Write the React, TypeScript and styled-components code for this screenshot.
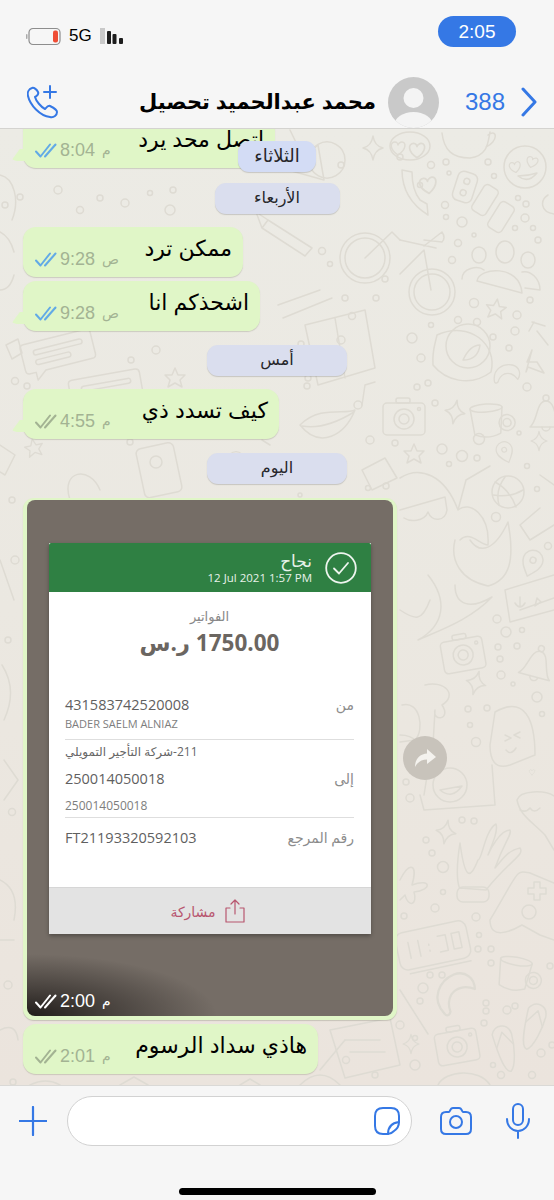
import React, { FunctionComponent } from 'react'
import styled, { createGlobalStyle } from 'styled-components'

const blue = '#3578e5'
const arabic = '"Liberation Sans", "DejaVu Sans", sans-serif'
const receiptFont = '"Open Sans", "DejaVu Sans", sans-serif'

const Global = createGlobalStyle`
  html, body { margin: 0; padding: 0; background: #f6f6f6; }
  body { font-family: ${arabic}; }
`

const Page = styled.div`
  width: 554px;
  height: 1200px;
  display: flex;
  flex-direction: column;
  overflow: hidden;
  color: #000;
`

/* header */
const Header = styled.header`
  height: 129px;
  flex: none;
  box-sizing: border-box;
  background: #f6f6f6;
  border-bottom: 1px solid #d4d3d0;
  display: flex;
  flex-direction: column;
`
const StatusBar = styled.div`
  display: flex;
  align-items: flex-start;
  justify-content: space-between;
  padding: 16px 38px 0 26px;
  height: 48px;
  box-sizing: border-box;
`
const StatusLeft = styled.div`
  display: flex;
  align-items: center;
  gap: 7px;
  margin-top: 10px;
  font-size: 17px;
  line-height: 18px;
`
const ClockPill = styled.div`
  width: 78px;
  height: 31px;
  border-radius: 16px;
  background: ${blue};
  color: #fff;
  font-size: 19px;
  line-height: 31px;
  text-align: center;
`
const NavBar = styled.div`
  display: flex;
  align-items: center;
  height: 52px;
  margin-top: 29px;
  padding: 0 16px 0 27px;
`
const Name = styled.div`
  margin-left: 77px;
  width: 240px;
  font-size: 21px;
  font-weight: 700;
  white-space: nowrap;
  text-align: right;
  direction: rtl;
`
const Avatar = styled.svg`
  margin-left: 12px;
  flex: none;
`
const Count = styled.div`
  margin-left: 26px;
  font-size: 24px;
  color: ${blue};
`
const NavEnd = styled.svg`
  margin-left: 16px;
`

/* chat */
const Chat = styled.main`
  flex: 1;
  min-height: 0;
  position: relative;
  overflow: hidden;
  display: flex;
  flex-direction: column;
  align-items: flex-start;
  background: linear-gradient(180deg, #ecebe5 0%, #ebe8e1 50%, #ebe4dd 100%);
`
const Wallpaper = styled.svg`
  position: absolute;
  inset: 0;
  fill: none;
  stroke: #dedbd3;
  stroke-width: 1.5;
  stroke-linecap: round;
  stroke-linejoin: round;
`
const Bubble = styled.div<{ $width: number; $top: number; $tail?: boolean }>`
  position: relative;
  flex: none;
  box-sizing: border-box;
  width: ${(p) => p.$width}px;
  height: 50px;
  margin: ${(p) => p.$top}px 0 0 23px;
  padding: 0 11px 0 12px;
  border-radius: 13px;
  background: #e0f6c7;
  box-shadow: 0 1px 1px rgba(90, 90, 70, 0.22);
  display: flex;
  justify-content: space-between;

  ${(p) =>
    p.$tail &&
    `&::before {
      content: '';
      position: absolute;
      left: -12px;
      bottom: 7px;
      width: 16px;
      height: 12px;
      background: #e0f6c7;
      clip-path: polygon(0 100%, 55% 0, 100% 0, 100% 100%);
      border-radius: 0 0 0 6px;
    }`}
`
const BubbleText = styled.div`
  order: 2;
  direction: rtl;
  font-size: 22px;
  line-height: 26px;
  margin-top: 9px;
  white-space: nowrap;
`
const Meta = styled.div<{ $light?: boolean }>`
  order: 1;
  align-self: flex-end;
  display: flex;
  align-items: center;
  gap: 2px;
  height: 24px;
  margin-bottom: 6px;
  direction: ltr;
  font-size: 18px;
  color: ${(p) => (p.$light ? '#fff' : '#a3b393')};
`
const MetaSuffix = styled.span`
  font-size: 14px;
  margin-left: 5px;
  font-family: 'DejaVu Sans', sans-serif;
`
const DayPill = styled.div<{ $width: number; $top: number }>`
  flex: none;
  align-self: center;
  position: relative;
  box-sizing: border-box;
  width: ${(p) => p.$width}px;
  height: 31px;
  margin-top: ${(p) => p.$top}px;
  border-radius: 11px;
  background: #dadeee;
  box-shadow: 0 1px 1px rgba(90, 90, 90, 0.25);
  direction: rtl;
  text-align: center;
  font-size: 16px;
  line-height: 30px;
  color: #26262a;
`
const FloatingPill = styled(DayPill)`
  position: absolute;
  top: 12px;
  left: 238px;
  margin: 0;
  background: #d3dcf5;
  font-size: 18px;
`
const ImageBubble = styled.div`
  position: relative;
  flex: none;
  box-sizing: border-box;
  width: 374px;
  height: 522px;
  margin: 14px 0 0 23px;
  padding: 2px 4px 4px;
  border-radius: 11px;
  background: #e0f6c7;
  box-shadow: 0 1px 1px rgba(90, 90, 70, 0.25);
`
const Photo = styled.div`
  position: relative;
  height: 516px;
  box-sizing: border-box;
  padding: 43px 22px 0;
  border-radius: 8px;
  overflow: hidden;
  background:
    radial-gradient(ellipse 190px 62px at 0% 100%, rgba(28, 24, 22, 0.95), rgba(28, 24, 22, 0.5) 45%, rgba(28, 24, 22, 0) 100%),
    #756d66;
`
const PhotoMeta = styled(Meta)`
  position: absolute;
  left: 8px;
  bottom: 3px;
  margin: 0;
`
const ForwardButton = styled.div`
  position: absolute;
  left: 380px;
  top: 238px;
  width: 44px;
  height: 44px;
  border-radius: 50%;
  background: #c8c3bb;
  display: flex;
  align-items: center;
  justify-content: center;
`

/* receipt inside the photo */
const Receipt = styled.div`
  width: 322px;
  background: #fff;
  font-family: ${receiptFont};
  color: #646464;
  box-shadow: 0 2px 4px rgba(0, 0, 0, 0.3);
`
const ReceiptHead = styled.div`
  height: 49px;
  box-sizing: border-box;
  background: #2f8043;
  border-radius: 2px 2px 0 0;
  color: #e8f2ea;
  display: flex;
  justify-content: flex-end;
  align-items: center;
  gap: 13px;
  padding: 0 14px 0 0;
`
const HeadText = styled.div`
  text-align: right;
`
const HeadTitle = styled.div`
  font-size: 17px;
  line-height: 20px;
  direction: rtl;
`
const HeadDate = styled.div`
  font-size: 11.5px;
  line-height: 13px;
`
const ReceiptBody = styled.div`
  height: 295px;
  box-sizing: border-box;
  padding: 16px 17px 0 16px;
`
const BillLabel = styled.div`
  font-size: 13px;
  line-height: 16px;
  text-align: center;
  color: #888;
  direction: rtl;
`
const Amount = styled.div`
  margin-top: 5px;
  height: 66px;
  direction: rtl;
  font-size: 22.5px;
  line-height: 28px;
  font-weight: 700;
  text-align: center;
  color: #6b6661;
`
const Row = styled.div<{ $top?: number }>`
  display: flex;
  justify-content: space-between;
  align-items: center;
  margin-top: ${(p) => p.$top ?? 0}px;
`
const Mono = styled.div`
  font-size: 14.5px;
  line-height: 20px;
  color: #5f5f5f;
`
const Label = styled.div`
  font-size: 14px;
  line-height: 20px;
  color: #8c8c8c;
  direction: rtl;
`
const SmallLine = styled.div<{ $size: number; $top: number; $rule: number }>`
  font-size: ${(p) => p.$size}px;
  line-height: 14px;
  color: #7d7d7d;
  margin-top: ${(p) => p.$top}px;
  padding-bottom: ${(p) => p.$rule}px;
  border-bottom: 1px solid #dedede;
`
const BankLine = styled.div`
  font-size: 12px;
  line-height: 16px;
  margin: 4px 0 9px;
  color: #666;
  direction: rtl;
  text-align: left;
`
const ShareBar = styled.div`
  height: 47px;
  background: #e3e3e3;
  border-top: 1px solid #d6d6d6;
  box-sizing: border-box;
  color: #b8566f;
  display: flex;
  align-items: center;
  justify-content: center;
  gap: 8px;
  padding-right: 4px;
  font-size: 14px;
  direction: rtl;
`

/* composer */
const Composer = styled.footer`
  height: 115px;
  flex: none;
  box-sizing: border-box;
  background: #f6f6f6;
  border-top: 1px solid #dad9d6;
  padding: 10px 22px 0 19px;
  position: relative;
`
const ComposerRow = styled.div`
  display: flex;
  align-items: center;
`
const Input = styled.div`
  width: 345px;
  height: 50px;
  margin-left: 20px;
  box-sizing: border-box;
  border: 1px solid #d2d2d2;
  border-radius: 25px;
  background: #fff;
  display: flex;
  align-items: center;
  justify-content: flex-end;
  padding-right: 11px;
`
const CameraIcon = styled.svg`
  margin-left: 28px;
`
const MicIcon = styled.svg`
  margin-left: 34px;
`
const HomeBar = styled.div`
  width: 197px;
  height: 7px;
  margin: 42px 0 0 160px;
  border-radius: 4px;
  background: #000;
`

const Ticks: FunctionComponent<{ color: string }> = ({ color }) => (
  <svg width="23" height="15" viewBox="0 0 23 15" fill="none" stroke={color} strokeWidth="2" strokeLinecap="round" strokeLinejoin="round">
    <path d="M1 8.5 L5.5 13.5 L15 1.5" />
    <path d="M10 13.5 L20.5 1.5" />
  </svg>
)

const heart = 'M0 7 C-9 1 -8 -6 -3 -6 C-1 -6 0 -4 0 -3 C0 -4 2 -6 4 -6 C8 -6 9 1 0 7 Z'

type At = { x: number; y: number; r?: number; s?: number }
const place = ({ x, y, r = 0, s = 1 }: At) => `translate(${x} ${y}) rotate(${r}) scale(${s})`

const Heart: FunctionComponent<At> = (p) => <path transform={place(p)} d={heart} />
const Star: FunctionComponent<At> = (p) => (
  <path transform={place(p)} d="M0 -10 L3 -3 L10 -3 L5 2 L7 9 L0 5 L-7 9 L-5 2 L-10 -3 L-3 -3 Z" />
)
const Sparkle: FunctionComponent<At> = (p) => (
  <path transform={place(p)} d="M0 -12 Q1.5 -2 10 0 Q1.5 2 0 12 Q-1.5 2 -10 0 Q-1.5 -2 0 -12 Z" />
)
const Pin: FunctionComponent<At> = (p) => (
  <g transform={place(p)}>
    <path d="M0 14 C-6 7 -10 3 -10 -3 A10 10 0 0 1 10 -3 C10 3 6 7 0 14 Z" />
    <circle cy="-3" r="3" />
  </g>
)
const Camera: FunctionComponent<At> = (p) => (
  <g transform={place(p)}>
    <rect x="-21" y="-15" width="42" height="32" rx="4" />
    <rect x="-8" y="-20" width="14" height="5" rx="2" />
    <circle cy="1" r="10" />
    <circle cy="1" r="5" />
    <circle cx="15" cy="-9" r="1.5" />
  </g>
)
const Mug: FunctionComponent<At> = (p) => (
  <g transform={place(p)}>
    <ellipse cy="-14" rx="16" ry="4" />
    <path d="M-16 -14 L-13 12 Q0 18 13 12 L16 -14" />
    <circle cx="20" cy="2" r="8" />
    <circle cx="20" cy="2" r="4" />
  </g>
)
const Croissant: FunctionComponent<At> = (p) => (
  <path transform={place(p)} d="M-14 8 C-16 -6 -4 -12 6 -10 C14 -8 16 0 12 6 C8 0 2 -2 -3 0 C-7 2 -9 5 -10 9 C-12 11 -14 10 -14 8 Z" />
)
const Bell: FunctionComponent<At> = (p) => (
  <g transform={place(p)}>
    <circle cy="-17" r="3" />
    <path d="M-16 12 C-8 6 -10 -14 0 -14 C10 -14 8 6 16 12 Z" />
    <path d="M-4 12 A4 4 0 0 0 4 12" />
  </g>
)
const ChatLines: FunctionComponent<At> = (p) => (
  <g transform={place(p)}>
    <path d="M-34 -16 H30 Q34 -16 34 -12 V10 Q34 14 30 14 H-18 L-28 22 V14 H-34 Q-38 14 -38 10 V-12 Q-38 -16 -34 -16 Z" />
    <rect x="-26" y="-8" width="50" height="5" rx="2.5" />
    <rect x="-26" y="2" width="36" height="5" rx="2.5" />
  </g>
)
const Flipflop: FunctionComponent<At> = (p) => (
  <g transform={place(p)}>
    <path d="M-9 -16 C-4 -26 9 -24 10 -12 C10 0 6 20 0 24 C-6 24 -8 8 -9 -16 Z" />
    <path d="M-8 -2 L1 -16 L9 -2" />
  </g>
)

const dots: [number, number, number][] = [
  [431, 165, 3.5], [446, 162, 3], [449, 173, 2], [488, 162, 3], [494, 176, 2.5], [445, 205, 3.5], [446, 217, 2.5],
  [462, 222, 5], [518, 198, 2.5], [526, 204, 3], [525, 218, 4], [515, 228, 2.5], [533, 228, 2.5], [538, 240, 3],
  [474, 235, 2], [458, 243, 3.5], [452, 260, 3.5], [474, 303, 4.5], [530, 300, 3], [517, 315, 4], [458, 320, 3.5],
  [477, 322, 3.5], [431, 325, 2.5], [412, 338, 5], [421, 358, 4], [515, 331, 4], [493, 337, 3], [509, 348, 3],
  [417, 387, 3], [428, 383, 3], [527, 387, 4], [435, 403, 3], [442, 449, 5], [462, 456, 5.5], [477, 458, 3],
  [449, 464, 2.5], [479, 439, 5.5], [519, 433, 2], [527, 466, 2.5], [537, 489, 2.5], [496, 517, 4.5], [548, 546, 3.5],
  [497, 619, 4], [506, 632, 5], [522, 630, 2.5], [498, 647, 3], [517, 646, 3], [500, 659, 3], [501, 675, 4],
  [513, 684, 2], [537, 697, 5], [542, 714, 2.5], [468, 709, 3], [487, 708, 3], [470, 725, 2.5], [476, 742, 4.5],
  [410, 798, 4], [406, 782, 3], [462, 820, 3], [474, 821, 3], [426, 840, 3], [432, 853, 3], [443, 867, 5.5],
  [443, 892, 2.5], [435, 908, 4], [404, 916, 3], [476, 917, 4], [479, 935, 2.5], [478, 949, 3], [491, 949, 3],
  [491, 963, 3], [430, 975, 3], [442, 975, 3], [423, 988, 5], [420, 1001, 3], [486, 1003, 3], [486, 1011, 3],
  [507, 1010, 4], [515, 1006, 3], [484, 1023, 3], [415, 1065, 5], [493, 1065, 2.5], [501, 1075, 3.5], [532, 1075, 3.5],
  [541, 1053, 4], [552, 1045, 3], [550, 966, 3], [341, 165, 3], [400, 157, 3], [420, 185, 2.5], [322, 251, 3.5],
  [330, 264, 2.5], [385, 279, 3], [345, 298, 3], [376, 298, 3], [352, 316, 3.5], [131, 360, 3], [156, 350, 4],
  [288, 362, 3], [301, 344, 3], [15, 381, 3.5], [27, 386, 3], [288, 371, 3], [307, 386, 3], [308, 378, 3],
  [370, 440, 4], [395, 443, 3], [368, 488, 2.5], [308, 480, 3], [300, 495, 2], [386, 486, 3], [5, 205, 3], [20, 197, 3],
  [58, 190, 4], [80, 210, 3.5], [100, 198, 3], [125, 203, 4], [150, 193, 2.5], [170, 210, 5], [173, 190, 3],
  [130, 442, 3], [140, 430, 4], [12, 500, 3], [300, 1035, 2.5], [360, 1010, 3], [346, 1060, 3.5], [13, 1082, 3], [8, 985, 4],
  [12, 812, 3.5], [8, 640, 3], [15, 560, 4], [415, 1038, 2.5], [400, 1025, 4], [375, 1075, 3]
]

const Doodles: FunctionComponent = () => (
  <Wallpaper width="554" height="956" viewBox="0 129 554 956">
    {dots.map(([cx, cy, r]) => (
      <circle key={`${cx}-${cy}`} cx={cx} cy={cy} r={r} />
    ))}

    {/* top right */}
    <path d="M442 133 C444 150 452 158 470 158 C488 156 488 142 490 132 M488 135 C498 128 498 142 486 147" />
    <ellipse cx="410" cy="146" rx="20" ry="14" />
    <Heart x={417} y={150} s={1.1} />
    <Heart x={428} y={185} r={-8} s={1.2} />
    <circle cx="525" cy="167" r="21" />
    <Heart x={515} y={167} r={-10} s={0.8} />
    <Heart x={532} y={162} r={15} s={0.8} />
    <path d="M518 176 Q528 184 537 173 Q528 176 518 176 Z" />
    <path d="M402 170 C402 190 412 205 428 215 L427 204 L420 200 C416 195 412 188 412 172 Z" />
    <g transform="translate(465 187) rotate(18)">
      <rect x="-10" y="-15" width="20" height="30" rx="6" />
      <circle cy="-6" r="3" />
      <circle cy="6" r="3" />
    </g>
    <rect x="-8" y="-15" width="16" height="30" rx="4" transform="translate(485 200) rotate(32)" />
    <rect x="-8" y="-15" width="16" height="30" rx="4" transform="translate(501 217) rotate(32)" />
    <circle cx="432" cy="292" r="23" />
    <circle cx="432" cy="292" r="18" />
    <path d="M400 240 L436 248 M400 274 L424 250 L431 290 M424 246 L442 232 Q446 238 442 242 L424 240" />
    <ellipse cx="479" cy="255" rx="7" ry="8" />
    <ellipse cx="505" cy="252" rx="9" ry="11" />
    <ellipse cx="528" cy="260" rx="7" ry="8" />
    <path d="M477 281 C479 267 520 264 522 293 L477 281 Z M462 279 C462 268 478 265 484 270" />
    <path d="M522 272 C530 270 540 278 540 290 L525 288" />
    <Star x={496} y={309} r={8} s={1} />
    <circle cx="468" cy="346" r="22" />
    <path d="M437 335 C470 320 498 345 491 372 C470 388 445 380 433 365 C432 350 435 345 437 335 Z" />
    <path d="M463 360 Q470 345 480 345 Q478 360 463 360 Z" />
    <path d="M532 350 L527 362 L537 362 L544 373 L528 367 L526 372 Z" />
    <Croissant x={507} y={374} s={0.9} />
    <Sparkle x={455} y={412} r={10} />
    <Mug x={487} y={422} r={-4} />
    <Bell x={546} y={415} />
    <Camera x={404} y={418} />
    <path d="M548 195 C540 200 540 212 554 214" />
    <path d="M529 331 L534 322 M537 331 L548 345 M532 322 L545 326" />

    {/* middle right */}
    <Star x={414} y={454} />
    <Pin x={505} y={452} s={0.8} r={-20} />
    <Sparkle x={539} y={441} s={0.8} />
    <circle cx="508" cy="492" r="16" />
    <path d="M495 482 Q510 490 516 507 M505 477 Q495 490 499 505 M493 495 Q510 498 523 490" />
    <path d="M400 478 C420 465 445 475 458 510 L466 480 L490 466 M458 510 C470 500 490 515 488 545 C480 545 470 530 460 540" />
    <path d="M400 510 L445 497 L447 510 C445 522 432 522 428 512 C424 522 410 522 404 518" />
    <path d="M455 540 C450 560 460 580 488 586 C510 580 515 560 508 522 C495 550 480 555 470 540" />
    <path d="M455 585 C455 605 470 610 492 597 C470 620 440 630 418 640 C445 625 448 600 428 575" />
    <path d="M400 610 C415 620 422 622 430 600" />
    <path d="M520 610 L554 598 M505 590 L554 575 M505 590 L510 622 L554 610" />
    <path d="M537 598 L541 602 L535 606 Z" />
    <path d="M520 597 v10 M515 603 q5 8 10 0" />
    <Pin x={532} y={563} r={20} />
    <path d="M540 508 L520 525 L530 540 L554 525 M540 475 L554 485" />
    <Camera x={463} y={654} r={-10} />
    <Bell x={537} y={665} r={15} />
    <Sparkle x={476} y={683} r={15} />
    <path d="M425 685 C445 680 458 695 442 705 C452 720 432 722 435 710 L433 745" />
    <path d="M402 705 C420 700 425 730 415 740 L400 742" />
    <path d="M400 735 C415 735 422 745 418 755" />
    <path d="M495 712 C525 695 535 720 535 755 L510 765 C495 770 490 760 490 745 Z" />
    <path d="M505 735 l6 3 l-6 3 M520 732 l-6 3 l6 3" />
    <path d="M506 750 q5 6 10 -2" />

    {/* lower right */}
    <path d="M420 795 L424 810 L495 805 L492 765 M428 770 L424 795" />
    <circle cx="450" cy="785" r="17" />
    <path d="M440 790 Q452 800 462 786 Z" />
    <Heart x={532} y={772} s={0.4} />
    <path d="M517 800 C520 790 545 790 554 796 M517 800 C520 815 530 820 545 835 L554 850" />
    <path d="M520 810 q6 3 10 -2 M530 808 q4 6 10 0" />
    <Sparkle x={446} y={832} r={10} />
    <path d="M460 843 C454 880 460 890 460 888 L486 890 C510 860 525 855 520 848 C508 850 502 860 495 868 C505 840 512 835 510 830 C500 830 490 850 488 855 C494 840 498 830 496 824 C485 830 482 860 478 860 C470 880 465 880 460 843 Z" />
    <rect x="457" y="887" width="32" height="15" rx="6" />
    <path d="M490 920 C520 870 515 870 530 873 L554 883 M490 920 C490 940 510 932 522 925 L540 935 L554 940" />
    <path d="M528 888 h6 v-6 h6 v6 h6 v6 h-6 v6 h-6 v-6 h-6 Z" />
    <circle cx="529" cy="912" r="7" />
    <path d="M400 880 C410 860 418 865 412 885 C432 878 432 890 414 892 C418 905 408 908 405 895 L400 900" />
    <g transform="translate(435 945) rotate(-12)">
      <rect x="-38" y="-19" width="72" height="38" rx="8" />
      <path d="M-26 -8 V8 M-16 -8 V8 M-6 -2 V-1 M-6 4 V5 M4 -8 H12 V8 H4 M18 -8 H26 V8 H18 Z" />
      <path d="M-30 23 H32" />
    </g>
    <Mug x={514} y={975} r={10} />
    <Croissant x={455} y={992} s={1.5} r={-35} />
    <path d="M400 990 L428 1034" />
    <Sparkle x={411} y={1044} s={0.8} />
    <Camera x={457} y={1046} r={-10} />
    <Flipflop x={505} y={1048} r={-15} />
    <Flipflop x={533} y={1026} r={15} />
    <path d="M438 1085 C445 1070 480 1068 490 1085" />

    {/* middle and left, seen between the bubbles */}
    <Sparkle x={373} y={148} />
    <path d="M318 145 L324 180 L288 170 Z M290 130 L302 155" />
    <path d="M345 160 a18 18 0 1 0 0 .1" />
    <Heart x={398} y={148} />
    <path d="M268 220 L312 248 L305 256 L262 228 Z M262 228 L256 212 L268 220" />
    <circle cx="365" cy="258" r="25" />
    <circle cx="365" cy="258" r="20" />
    <path d="M365 258 L392 232 L400 240 M278 305 L320 290 M283 318 L332 298" />
    <path d="M305 325 L365 310 L375 368 L318 385 Z M335 318 L345 378" />
    <circle cx="341" cy="340" r="4" />
    <ChatLines x={60} y={352} r={-14} />
    <ChatLines x={108} y={390} r={-10} />
    <Star x={175} y={378} />
    <path d="M365 385 L362 405 M365 385 L375 382" />
    <circle cx="358" cy="405" r="4" />
    <path d="M300 425 C320 405 345 415 355 410 C345 435 320 450 300 425 Z M302 426 Q325 430 354 412" />
    <Star x={34} y={448} s={0.9} r={-12} />
    <rect x="140" y="445" width="38" height="50" rx="5" transform="rotate(-12 160 470)" />
    <circle cx="156" cy="462" r="6" />
    <Pin x={236} y={462} s={0.8} />
    <path d="M0 445 L15 455 L5 475 L0 472" />
    <path d="M70 500 C60 470 90 465 100 490 M250 470 L272 465 M270 445 L262 440" />
    <path d="M362 470 L385 458 L397 478 L372 490 Z" />

    <path d="M0 175 C14 178 20 200 12 220" />
    <path d="M0 232 q10 5 14 20 M0 290 q10 0 14 -15" />
    <path d="M6 345 l12 -6 l4 14 l-10 6 Z" />
    <path d="M0 560 L14 600 M2 665 Q18 690 4 720 M4 760 L18 780 L4 800" />
    <path d="M0 880 q20 10 14 40 M0 940 h14 M0 1030 q16 -8 18 10" />
    <path d="M330 1030 L390 1018 L400 1065 L345 1078 Z M345 1040 H380 M350 1052 H385" />
    <path d="M320 1070 L345 1040 M300 1085 q20 -20 40 0" />
    <path d="M30 1085 q16 -8 30 0 M120 1085 l14 -8 l14 8 M240 1085 l10 -6 l10 6" />
  </Wallpaper>
)

const Message: FunctionComponent<{
  text: string
  time: string
  suffix: string
  width: number
  top: number
  tail?: boolean
  read?: boolean
}> = ({ text, time, suffix, width, top, tail, read }) => (
  <Bubble $width={width} $top={top} $tail={tail}>
    <Meta>
      <Ticks color={read ? '#62aae6' : '#a3b393'} />
      {time}
      <MetaSuffix>{suffix}</MetaSuffix>
    </Meta>
    <BubbleText>{text}</BubbleText>
  </Bubble>
)

const App: FunctionComponent = () => (
  <Page>
    <Global />
    <Header>
      <StatusBar>
        <StatusLeft>
          <svg width="36" height="20" viewBox="0 0 36 20" fill="none">
            <rect x="0" y="8" width="1.5" height="5" rx="0.7" fill="#aaa" />
            <rect x="3" y="2.5" width="31" height="16" rx="4" stroke="#8d8d8d" strokeWidth="1.2" />
            <rect x="27" y="4.5" width="5" height="12" rx="2" fill="#ef4d35" />
          </svg>
          5G
          <svg width="26" height="18" viewBox="0 0 26 18">
            <rect x="1" y="1" width="5" height="16" fill="#c9c9c9" />
            <rect x="8" y="4" width="4" height="13" rx="1" fill="#1d1d1d" />
            <rect x="13.5" y="7" width="4" height="10" rx="1" fill="#1d1d1d" />
            <rect x="20" y="11" width="4" height="6" rx="1" fill="#1d1d1d" />
          </svg>
        </StatusLeft>
        <ClockPill>2:05</ClockPill>
      </StatusBar>
      <NavBar>
        <svg width="32" height="34" viewBox="0 0 32 34" fill="none" stroke={blue} strokeWidth="2" strokeLinecap="round" strokeLinejoin="round">
          <path d="M5 3 C2 4 0 7 1 11 C3 20 13 31 23 32 C27 33 30 30 30 27 C30 25 25 22 23 21 C21 20 19 23 18 24 C14 22 9 16 8 12 C10 11 12 9 11 7 C10 5 7 2 5 3 Z" />
          <path d="M23 1 V13 M17 7 H29" />
        </svg>
        <Name>محمد عبدالحميد تحصيل</Name>
        <Avatar width="51" height="51" viewBox="0 0 51 51">
          <defs>
            <clipPath id="avatarClip">
              <circle cx="25.5" cy="25.5" r="25.5" />
            </clipPath>
          </defs>
          <circle cx="25.5" cy="25.5" r="25.5" fill="#c9c9c9" />
          <g clipPath="url(#avatarClip)" fill="#f4f4f4">
            <circle cx="25.5" cy="21" r="10" />
            <ellipse cx="25.5" cy="48" rx="19" ry="13" />
          </g>
        </Avatar>
        <Count>388</Count>
        <NavEnd width="16" height="30" viewBox="0 0 16 30" fill="none" stroke={blue} strokeWidth="3" strokeLinecap="round" strokeLinejoin="round">
          <path d="M2 2 L14 15 L2 28" />
        </NavEnd>
      </NavBar>
    </Header>

    <Chat>
      <Doodles />
      <Message text="اتصل محد يرد" time="8:04" suffix="م" width={252} top={-11} tail read />
      <FloatingPill $width={78} $top={0}>الثلاثاء</FloatingPill>
      <DayPill $width={125} $top={15}>الأربعاء</DayPill>
      <Message text="ممكن ترد" time="9:28" suffix="ص" width={220} top={13} read />
      <Message text="اشحذكم انا" time="9:28" suffix="ص" width={237} top={4} tail read />
      <DayPill $width={140} $top={14}>أمس</DayPill>
      <Message text="كيف تسدد ذي" time="4:55" suffix="م" width={256} top={13} tail />
      <DayPill $width={140} $top={14}>اليوم</DayPill>
      <ImageBubble>
        <Photo>
          <Receipt>
            <ReceiptHead>
              <HeadText>
                <HeadTitle>نجاح</HeadTitle>
                <HeadDate>12 Jul 2021 1:57 PM</HeadDate>
              </HeadText>
              <svg width="32" height="32" viewBox="0 0 32 32" fill="none" stroke="#eef5ef" strokeWidth="1.8" strokeLinecap="round" strokeLinejoin="round">
                <circle cx="16" cy="16" r="14.8" />
                <path d="M9 16.5 L14 21.5 L23 11" />
              </svg>
            </ReceiptHead>
            <ReceiptBody>
              <BillLabel>الفواتير</BillLabel>
              <Amount>1750.00 ر.س</Amount>
              <Row>
                <Mono>431583742520008</Mono>
                <Label>من</Label>
              </Row>
              <SmallLine $size={11} $top={2} $rule={8}>BADER SAELM ALNIAZ</SmallLine>
              <BankLine>211-شركة التأجير التمويلي</BankLine>
              <Row>
                <Mono>250014050018</Mono>
                <Label>إلى</Label>
              </Row>
              <SmallLine $size={12} $top={10} $rule={4}>250014050018</SmallLine>
              <Row $top={10}>
                <Mono>FT21193320592103</Mono>
                <Label>رقم المرجع</Label>
              </Row>
            </ReceiptBody>
            <ShareBar>
              <svg width="22" height="26" viewBox="0 0 22 26" fill="none" stroke="#b8566f" strokeWidth="1.2" strokeLinecap="round" strokeLinejoin="round">
                <path d="M6 10 H2 V24 H20 V10 H16" />
                <path d="M11 16 V2 M7 6 L11 2 L15 6" />
              </svg>
              مشاركة
            </ShareBar>
          </Receipt>
          <PhotoMeta $light>
            <Ticks color="#fff" />
            2:00
            <MetaSuffix>م</MetaSuffix>
          </PhotoMeta>
        </Photo>
        <ForwardButton>
          <svg width="22" height="20" viewBox="0 0 22 20" fill="#f4f2ee">
            <path d="M13 1 L22 9 L13 16 V11.5 C8 11.5 4 13.5 1 19 C1 11 6 6 13 5.5 Z" />
          </svg>
        </ForwardButton>
      </ImageBubble>
      <Message text="هاذي سداد الرسوم" time="2:01" suffix="م" width={295} top={4} />
    </Chat>

    <Composer>
      <ComposerRow>
        <svg width="28" height="30" viewBox="0 0 28 30" fill="none" stroke={blue} strokeWidth="2.2" strokeLinecap="round">
          <path d="M14 1 V29 M0 15 H28" />
        </svg>
        <Input>
          <svg width="26" height="28" viewBox="0 0 26 28" fill="none" stroke={blue} strokeWidth="2" strokeLinecap="round" strokeLinejoin="round">
            <path d="M14 27 H9 C4 27 1 24 1 19 V9 C1 4 4 1 9 1 H17 C22 1 25 4 25 9 V15 C25 18 23 22 20 24 C18 26 16 27 14 27 Z" />
            <path d="M14 27 C14 20 17 16 25 15" />
          </svg>
        </Input>
        <CameraIcon width="32" height="30" viewBox="0 0 32 30" fill="none" stroke={blue} strokeWidth="2" strokeLinecap="round" strokeLinejoin="round">
          <path d="M6 6 H9 C10 6 10 2 13 2 H19 C22 2 22 6 23 6 H26 C29 6 31 8 31 11 V23 C31 26 29 28 26 28 H6 C3 28 1 26 1 23 V11 C1 8 3 6 6 6 Z" />
          <circle cx="16" cy="16" r="6" />
        </CameraIcon>
        <MicIcon width="24" height="36" viewBox="0 0 24 36" fill="none" stroke={blue} strokeWidth="2" strokeLinecap="round" strokeLinejoin="round">
          <rect x="7" y="1" width="10" height="21" rx="5" />
          <path d="M1 16 C1 23 6 28 12 28 C18 28 23 23 23 16 M12 28 V35" />
        </MicIcon>
      </ComposerRow>
      <HomeBar />
    </Composer>
  </Page>
)

export default App
